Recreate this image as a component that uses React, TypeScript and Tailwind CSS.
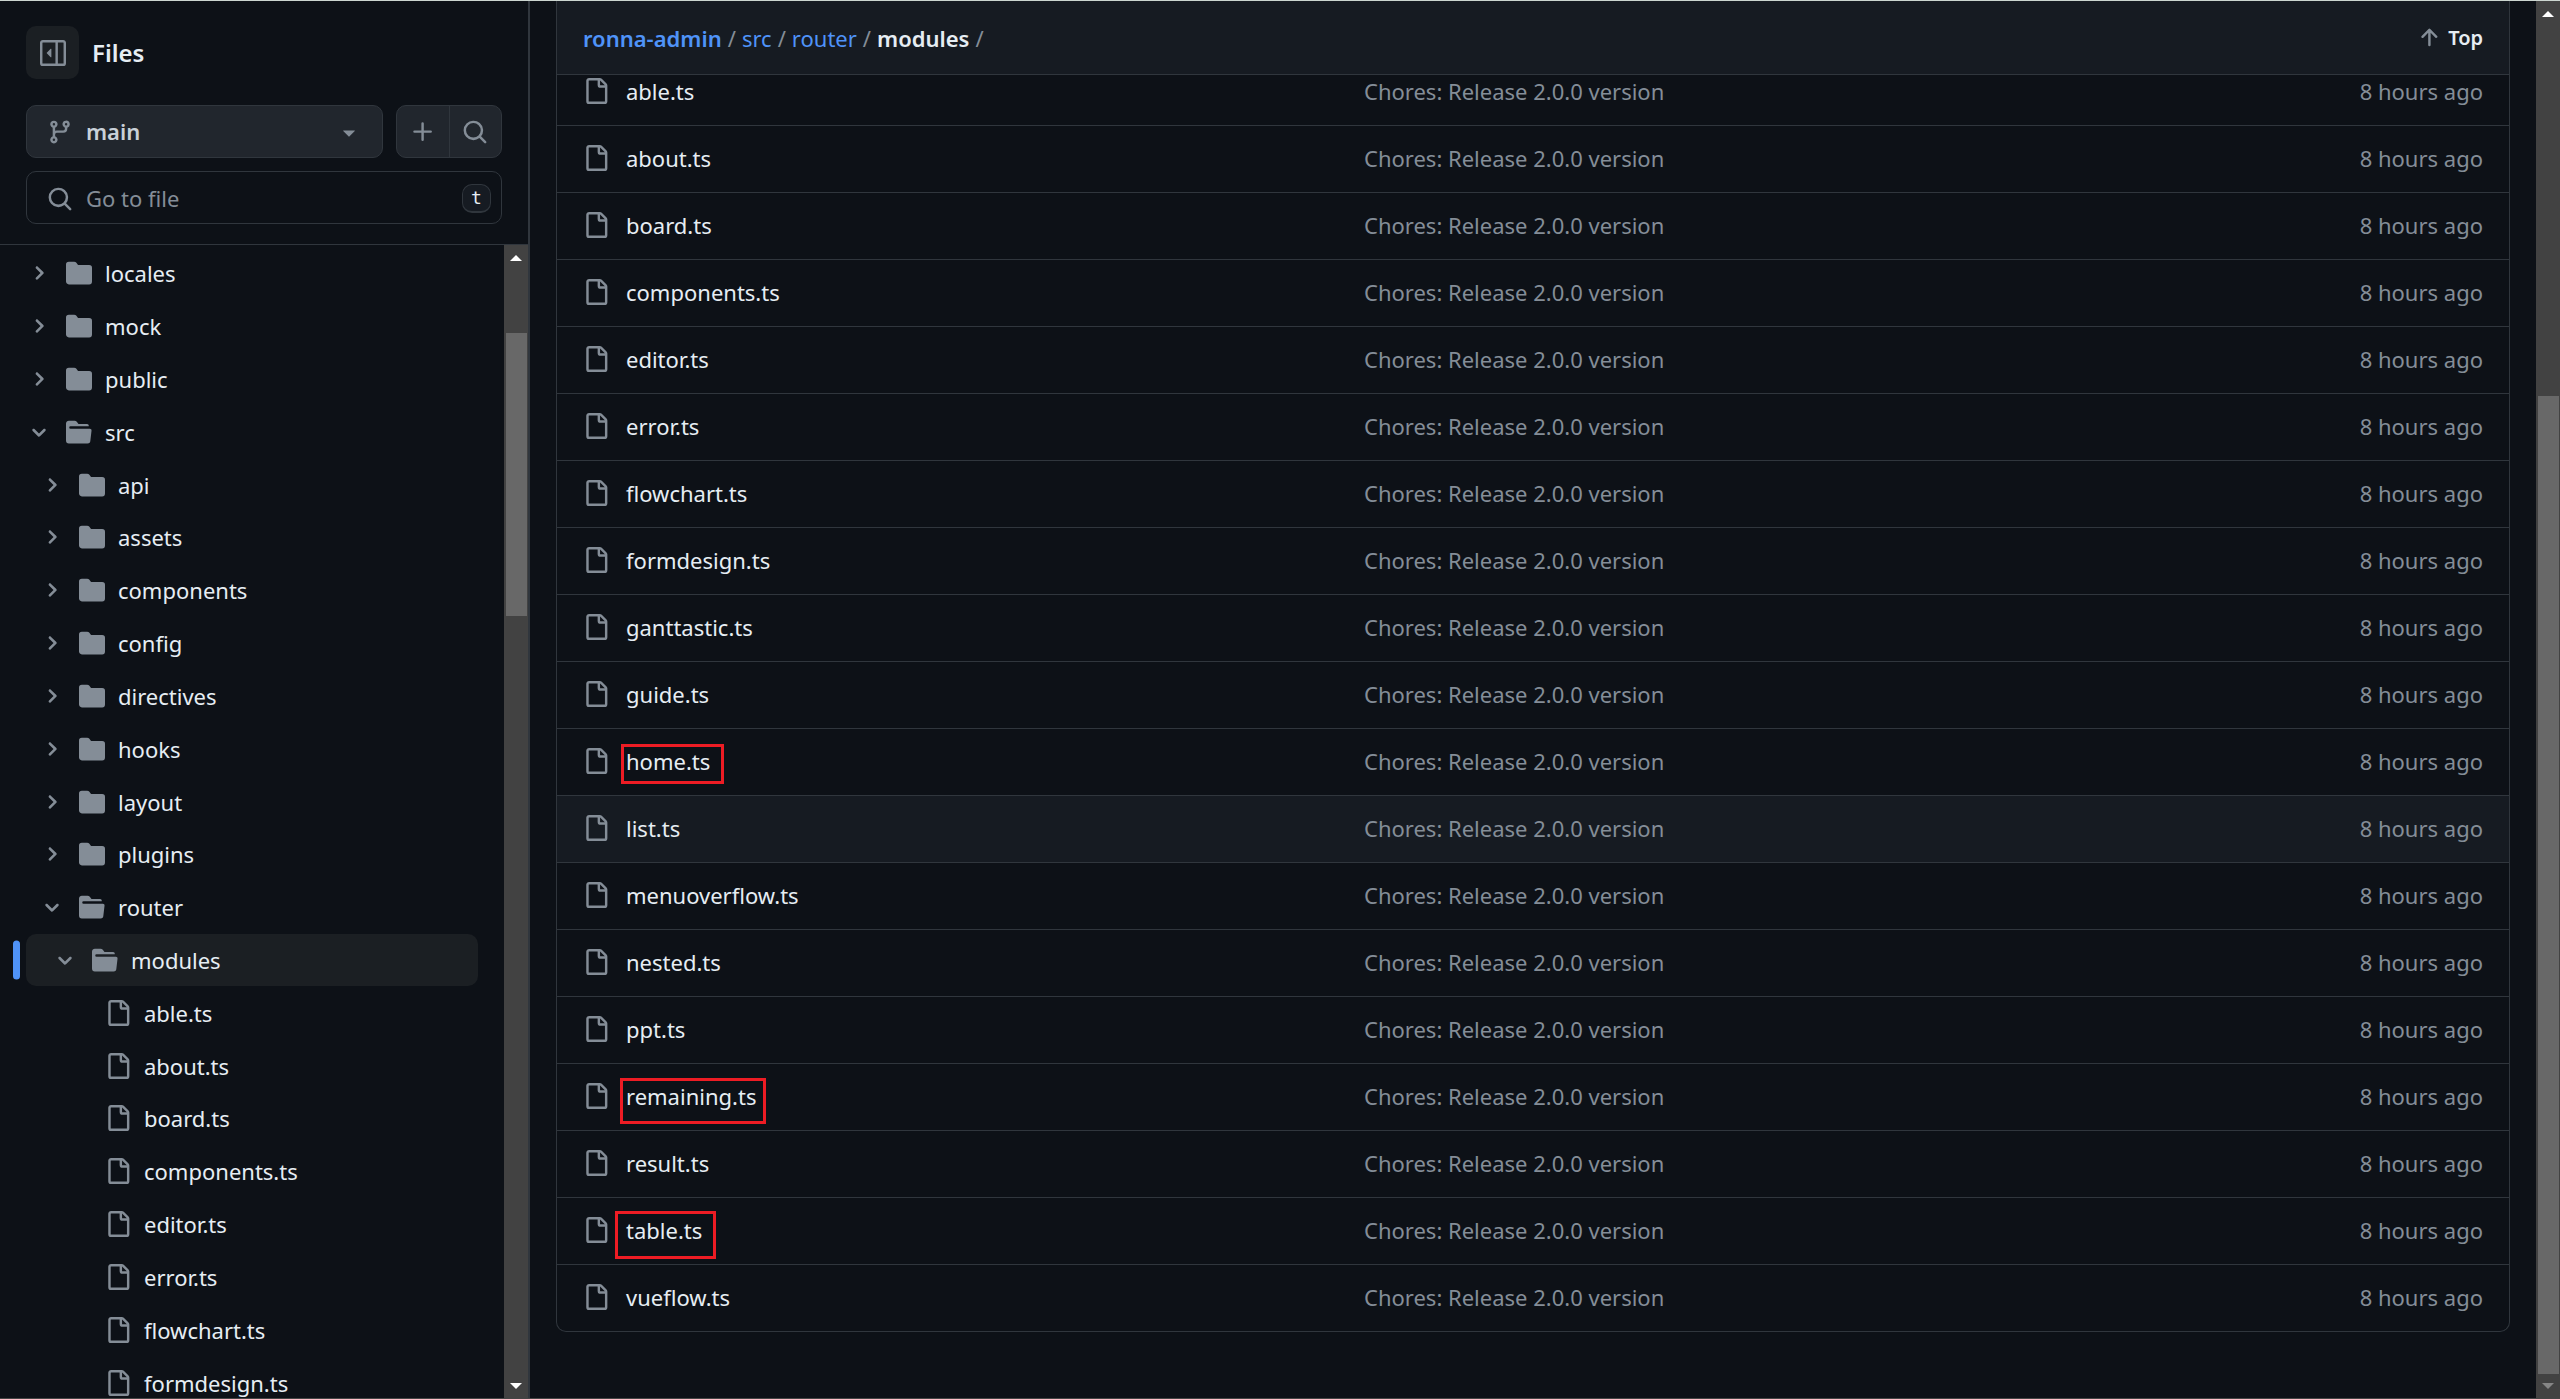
import type { ReactNode } from "react";

const paths = {
  file: "M2 1.75C2 .784 2.784 0 3.75 0h6.586c.464 0 .909.184 1.237.513l2.914 2.914c.329.328.513.773.513 1.237v9.586A1.75 1.75 0 0 1 13.25 16h-9.5A1.75 1.75 0 0 1 2 14.25Zm1.75-.25a.25.25 0 0 0-.25.25v12.5c0 .138.112.25.25.25h9.5a.25.25 0 0 0 .25-.25V6h-2.75A1.75 1.75 0 0 1 9 4.25V1.5Zm6.75.062V4.25c0 .138.112.25.25.25h2.688l-.011-.013-2.914-2.914-.013-.011Z",
  folder:
    "M1.75 1A1.75 1.75 0 0 0 0 2.75v10.5C0 14.216.784 15 1.75 15h12.5A1.75 1.75 0 0 0 16 13.25v-8.5A1.75 1.75 0 0 0 14.25 3H7.5a.25.25 0 0 1-.2-.1l-.9-1.2C6.07 1.26 5.55 1 5 1H1.75Z",
  folderOpen:
    "M.513 1.513A1.75 1.75 0 0 1 1.75 1h3.5c.55 0 1.07.26 1.4.7l.9 1.2a.25.25 0 0 0 .2.1H13a1 1 0 0 1 1 1v.5H2.75a.75.75 0 0 0 0 1.5h11.978a1 1 0 0 1 .994 1.117L15 13.25A1.75 1.75 0 0 1 13.25 15H1.75A1.75 1.75 0 0 1 0 13.25V2.75c0-.464.184-.91.513-1.237Z",
  branch:
    "M9.5 3.25a2.25 2.25 0 1 1 3 2.122V6A2.5 2.5 0 0 1 10 8.5H6a1 1 0 0 0-1 1v1.128a2.251 2.251 0 1 1-1.5 0V5.372a2.25 2.25 0 1 1 1.5 0v1.836A2.493 2.493 0 0 1 6 7h4a1 1 0 0 0 1-1v-.628A2.25 2.25 0 0 1 9.5 3.25Zm-6 0a.75.75 0 1 0 1.5 0 .75.75 0 0 0-1.5 0Zm8.25-.75a.75.75 0 1 0 0 1.5.75.75 0 0 0 0-1.5ZM4.25 12a.75.75 0 1 0 0 1.5.75.75 0 0 0 0-1.5Z",
  caret:
    "m4.427 7.427 3.396 3.396a.25.25 0 0 0 .354 0l3.396-3.396A.25.25 0 0 0 11.396 7H4.604a.25.25 0 0 0-.177.427Z",
  plus: "M7.75 2a.75.75 0 0 1 .75.75V7h4.25a.75.75 0 0 1 0 1.5H8.5v4.25a.75.75 0 0 1-1.5 0V8.5H2.75a.75.75 0 0 1 0-1.5H7V2.75A.75.75 0 0 1 7.75 2Z",
  search:
    "M10.68 11.74a6 6 0 0 1-7.922-8.982 6 6 0 0 1 8.982 7.922l3.04 3.04a.749.749 0 0 1-.326 1.275.749.749 0 0 1-.734-.215ZM11.5 7a4.499 4.499 0 1 0-8.997 0A4.499 4.499 0 0 0 11.5 7Z",
  arrowUp:
    "M3.47 7.78a.75.75 0 0 1 0-1.06l4.25-4.25a.75.75 0 0 1 1.06 0l4.25 4.25a.751.751 0 0 1-.018 1.042.751.751 0 0 1-1.042.018L9 4.81v7.44a.75.75 0 0 1-1.5 0V4.81L4.53 7.78a.75.75 0 0 1-1.06 0Z",
  sidebar:
    "m4.177 7.823 2.396-2.396A.25.25 0 0 1 7 5.604v4.792a.25.25 0 0 1-.427.177L4.177 8.177a.25.25 0 0 1 0-.354ZM0 1.75C0 .784.784 0 1.75 0h12.5C15.216 0 16 .784 16 1.75v12.5A1.75 1.75 0 0 1 14.25 16H1.75A1.75 1.75 0 0 1 0 14.25Zm1.75-.25a.25.25 0 0 0-.25.25v12.5c0 .138.112.25.25.25H9.5v-13Zm12.5 13a.25.25 0 0 0 .25-.25V1.75a.25.25 0 0 0-.25-.25H11v13Z",
};

const chevrons = {
  right:
    "M4.7 10c-.2 0-.4-.1-.5-.2-.3-.3-.3-.8 0-1.1L6.9 6 4.2 3.3c-.3-.3-.3-.8 0-1.1.3-.3.8-.3 1.1 0l3.3 3.2c.3.3.3.8 0 1.1L5.3 9.7c-.2.2-.4.3-.6.3Z",
  down: "M6 8.825c-.2 0-.4-.1-.5-.2l-3.3-3.3c-.3-.3-.3-.8 0-1.1.3-.3.8-.3 1.1 0l2.7 2.7 2.7-2.7c.3-.3.8-.3 1.1 0 .3.3.3.8 0 1.1l-3.2 3.2c-.2.2-.4.3-.6.3Z",
};

function Icon({ name }: { name: keyof typeof paths }) {
  return (
    <svg viewBox="0 0 16 16" className="size-[26px] shrink-0 fill-[#848d97]" aria-hidden="true">
      <path d={paths[name]} />
    </svg>
  );
}

function Chevron({ open }: { open: boolean }) {
  return (
    <svg viewBox="0 0 12 12" className="size-5 shrink-0 fill-[#848d97]" aria-hidden="true">
      <path d={open ? chevrons.down : chevrons.right} />
    </svg>
  );
}

type Kind = "closed" | "open" | "file";
type Node = { name: string; level: number; kind: Kind; current?: boolean };

const tree: Node[] = [
  { name: "locales", level: 0, kind: "closed" },
  { name: "mock", level: 0, kind: "closed" },
  { name: "public", level: 0, kind: "closed" },
  { name: "src", level: 0, kind: "open" },
  { name: "api", level: 1, kind: "closed" },
  { name: "assets", level: 1, kind: "closed" },
  { name: "components", level: 1, kind: "closed" },
  { name: "config", level: 1, kind: "closed" },
  { name: "directives", level: 1, kind: "closed" },
  { name: "hooks", level: 1, kind: "closed" },
  { name: "layout", level: 1, kind: "closed" },
  { name: "plugins", level: 1, kind: "closed" },
  { name: "router", level: 1, kind: "open" },
  { name: "modules", level: 2, kind: "open", current: true },
  { name: "able.ts", level: 3, kind: "file" },
  { name: "about.ts", level: 3, kind: "file" },
  { name: "board.ts", level: 3, kind: "file" },
  { name: "components.ts", level: 3, kind: "file" },
  { name: "editor.ts", level: 3, kind: "file" },
  { name: "error.ts", level: 3, kind: "file" },
  { name: "flowchart.ts", level: 3, kind: "file" },
  { name: "formdesign.ts", level: 3, kind: "file" },
];

const indents = ["pl-[3px]", "pl-4", "pl-[29px]", "pl-[42px]"];

function TreeRow({ node }: { node: Node }) {
  const indent = indents[node.level];
  return (
    <li className="relative">
      {node.current && (
        <span className="absolute top-1/2 -left-[13px] h-[39px] w-[7px] -translate-y-1/2 rounded-full bg-[#4f93f8]" />
      )}
      <button
        type="button"
        className={`flex h-full w-full items-center rounded-[10px] text-left text-[22px] leading-[30px] text-[#e6edf3] ${indent} ${
          node.current ? "bg-[#1b1f23]" : ""
        }`}
      >
        {node.kind === "file" ? <span className="w-5 shrink-0" /> : <Chevron open={node.kind === "open"} />}
        <span className="ml-[17px] mr-[13px] flex">
          <Icon name={node.kind === "file" ? "file" : node.kind === "open" ? "folderOpen" : "folder"} />
        </span>
        {node.name}
      </button>
    </li>
  );
}

function ScrollArrow({ down, dim }: { down?: boolean; dim?: boolean }) {
  return (
    <svg viewBox="0 0 12 6" className={`h-[6px] w-3 ${dim ? "fill-[#868686]" : "fill-white"}`} aria-hidden="true">
      <path d={down ? "M0 0h12L6 6Z" : "M0 6h12L6 0Z"} />
    </svg>
  );
}

/* before / size / after are the shares of the track above, on and below the thumb. */
function ScrollTrack({ before, size, after, dimEnd }: { before: number; size: number; after: number; dimEnd?: boolean }) {
  return (
    <div className="flex h-full w-6 shrink-0 flex-col items-center bg-[#424242]">
      <div className="flex h-[26px] items-center">
        <ScrollArrow />
      </div>
      <div className="flex w-full flex-1 flex-col pr-px pl-[2px]">
        <div style={{ flexGrow: before, flexBasis: 0 }} />
        <div className="bg-[#686868]" style={{ flexGrow: size, flexBasis: 0 }} />
        <div style={{ flexGrow: after, flexBasis: 0 }} />
      </div>
      <div className="flex h-6 items-center">
        <ScrollArrow down dim={dimEnd} />
      </div>
    </div>
  );
}

function Sidebar() {
  return (
    <aside className="flex w-[530px] shrink-0 flex-col border-r-2 border-[#30363d]">
      <div className="flex flex-col gap-[13px] border-b border-[#30363d] px-[26px] pt-[25px] pb-5">
        <div className="mb-[13px] flex items-center gap-[13px]">
          <button
            type="button"
            aria-label="Collapse file tree"
            className="flex size-[53px] items-center justify-center rounded-[10px] bg-[#1b1f23]"
          >
            <Icon name="sidebar" />
          </button>
          <h2 className="text-2xl font-semibold text-[#e6edf3]">Files</h2>
        </div>
        <div className="flex gap-[13px]">
          <button
            type="button"
            className="flex h-[53px] flex-1 items-center rounded-[10px] border border-[#30363d] bg-[#21262d] pr-5 pl-5 text-[22px] font-semibold text-[#c9d1d9]"
          >
            <Icon name="branch" />
            <span className="ml-[13px] flex-1 text-left">main</span>
            <Icon name="caret" />
          </button>
          <div className="flex h-[53px] w-[106px] divide-x divide-[#30363d] rounded-[10px] border border-[#30363d] bg-[#21262d]">
            <button type="button" aria-label="Add file" className="flex flex-1 items-center justify-center">
              <Icon name="plus" />
            </button>
            <button type="button" aria-label="Search this repository" className="flex flex-1 items-center justify-center">
              <Icon name="search" />
            </button>
          </div>
        </div>
        <label className="flex h-[53px] items-center rounded-[10px] border border-[#30363d] pt-0.5 pr-[10px] pl-5">
          <Icon name="search" />
          <input
            type="text"
            aria-label="Go to file"
            placeholder="Go to file"
            className="ml-[13px] min-w-0 flex-1 bg-transparent text-[22px] text-[#e6edf3] outline-none placeholder:text-[#848d97]"
          />
          <kbd className="flex h-[29px] w-[29px] items-center justify-center rounded-[10px] border border-b-2 border-[#30363d] bg-[#161b22] font-['DejaVu_Sans_Mono',monospace] text-lg leading-none text-[#e6edf3]">
            t
          </kbd>
        </label>
      </div>
      <div className="flex min-h-0 flex-1">
        <ul className="mt-0.5 mr-[26px] ml-[26px] grid h-[1162px] flex-1 auto-rows-fr">
          {tree.map((node, i) => (
            <TreeRow key={i} node={node} />
          ))}
        </ul>
        <ScrollTrack before={62} size={283} after={758} />
      </div>
    </aside>
  );
}

const files = [
  "able.ts",
  "about.ts",
  "board.ts",
  "components.ts",
  "editor.ts",
  "error.ts",
  "flowchart.ts",
  "formdesign.ts",
  "ganttastic.ts",
  "guide.ts",
  "home.ts",
  "list.ts",
  "menuoverflow.ts",
  "nested.ts",
  "ppt.ts",
  "remaining.ts",
  "result.ts",
  "table.ts",
  "vueflow.ts",
];

/* Hand-drawn frames around three of the file names. */
const marks: Record<string, string> = {
  "home.ts": "-top-[2px] -left-[5px] h-10 w-[103px]",
  "remaining.ts": "-top-[3px] -left-[6px] h-[46px] w-[146px]",
  "table.ts": "-top-1 -left-[11px] h-12 w-[101px]",
};

function FileRow({ name }: { name: string }) {
  return (
    <tr className={`h-[67px] ${name === "list.ts" ? "bg-[#161b22]" : ""}`}>
      <td className="border-t border-[#30363d] pb-0.5 pl-[26px]">
        <div className="flex items-center gap-[17px]">
          <Icon name="file" />
          <span className="relative">
            <a href="#" className="text-[#e6edf3]">
              {name}
            </a>
            {marks[name] && <span className={`absolute border-3 border-[#ed1c24] ${marks[name]}`} />}
          </span>
        </div>
      </td>
      <td className="border-t border-[#30363d] pb-0.5">
        <a href="#">Chores: Release 2.0.0 version</a>
      </td>
      <td className="border-t border-[#30363d] pr-[26px] pb-0.5 text-right">8 hours ago</td>
    </tr>
  );
}

function Crumb({ children, strong }: { children: ReactNode; strong?: boolean }) {
  return (
    <a href="#" className={`text-[#4f93f8] ${strong ? "font-semibold" : ""}`}>
      {children}
    </a>
  );
}

function Main() {
  return (
    <main className="min-w-0 flex-1 px-[26px]">
      <div className="overflow-hidden rounded-b-[10px] border-x border-b border-[#30363d]">
        <header className="relative z-10 flex h-[74px] items-center justify-between border-b border-[#30363d] bg-[#161b22] px-[26px]">
          <nav aria-label="Breadcrumb" className="flex gap-[6px] text-[22px] leading-[30px] text-[#848d97]">
            <Crumb strong>ronna-admin</Crumb>
            <span>/</span>
            <Crumb>src</Crumb>
            <span>/</span>
            <Crumb>router</Crumb>
            <span>/</span>
            <h1 className="font-semibold text-[#e6edf3]">modules</h1>
            <span>/</span>
          </nav>
          <button type="button" className="flex items-center gap-[6px] text-xl font-semibold text-[#e6edf3]">
            <Icon name="arrowUp" />
            Top
          </button>
        </header>
        <table className="-mt-[17px] w-full table-fixed border-separate border-spacing-0 text-[22px] leading-[30px] text-[#848d97]">
          <colgroup>
            <col className="w-[807px]" />
            <col />
            <col className="w-[260px]" />
          </colgroup>
          <tbody>
            {files.map((name) => (
              <FileRow key={name} name={name} />
            ))}
          </tbody>
        </table>
      </div>
    </main>
  );
}

export default function App() {
  return (
    <div className="flex h-screen overflow-hidden border-t border-b border-t-[#ccd6d0] border-b-[#454545] bg-[#0d1117] font-['Noto_Sans',sans-serif]">
      <Sidebar />
      <Main />
      <ScrollTrack before={369} size={978} after={0} dimEnd />
    </div>
  );
}
